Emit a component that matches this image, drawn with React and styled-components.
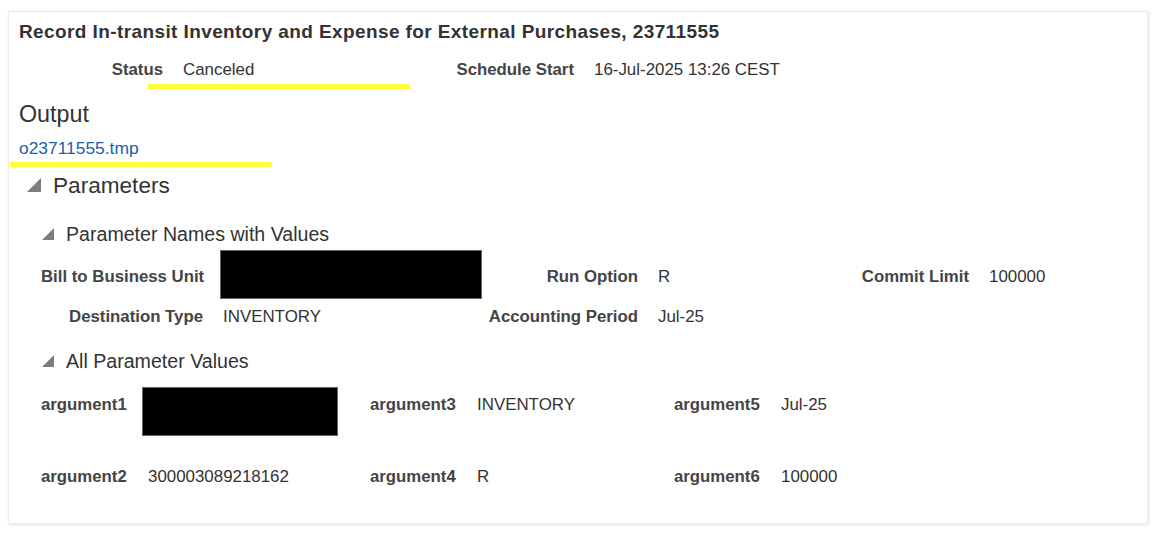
import React from "react";
import styled, { createGlobalStyle } from "styled-components";

const GlobalStyle = createGlobalStyle`
  body {
    margin: 0;
    background: #ffffff;
    font-family: "Liberation Sans", Arial, Helvetica, sans-serif;
    color: #333333;
  }
`;

const Page = styled.div`
  padding: 11px 8px 10px 8px;
`;

const Card = styled.section`
  border: 1px solid #ececec;
  box-shadow: 1px 1px 3px rgba(0, 0, 0, 0.12);
  padding: 0 10px 26px 10px;
  background: #fff;
`;

const Title = styled.h1`
  margin: 10px 0 0 0;
  font-size: 19px;
  letter-spacing: 0.4px;
  line-height: 20px;
  font-weight: bold;
  color: #333;
`;

const StatusRow = styled.div`
  position: relative;
  display: grid;
  grid-template-columns: 144px 221px 150px auto;
  column-gap: 20px;
  margin-top: 18px;
  height: 20px;
  align-items: center;
`;

const Label = styled.span`
  font-size: 16.8px;
  font-weight: bold;
  color: #444;
  white-space: nowrap;
  text-align: ${(p) => (p.left ? "left" : "right")};
`;

const Value = styled.span`
  font-size: 16.9px;
  color: #333;
  white-space: nowrap;
`;

const Underline = styled.div`
  position: absolute;
  top: 24px;
  left: ${(p) => p.left}px;
  width: 262px;
  height: 5px;
  background: #ffff3c;
`;

const Heading = styled.h2`
  margin: 21px 0 0 0;
  font-size: 23.3px;
  line-height: 26px;
  font-weight: normal;
  color: #333;
`;

const LinkRow = styled.div`
  position: relative;
  margin-top: 11px;
  height: 20px;
  display: flex;
  align-items: center;
`;

const FileLink = styled.a`
  font-size: 17.4px;
  color: #1a5ea8;
  text-decoration: none;
`;

const Disclosure = styled.div`
  display: flex;
  align-items: center;
  gap: 12px;
  margin-top: ${(p) => p.top}px;
  margin-left: ${(p) => (p.small ? 23 : 8)}px;
  height: ${(p) => (p.small ? 24 : 26)}px;
  font-size: ${(p) => (p.small ? 19.6 : 22.6)}px;
  color: #333;

  svg {
    flex: none;
    margin-top: ${(p) => (p.small ? -1 : -2)}px;
  }
`;

const FormGrid = styled.div`
  display: grid;
  grid-template-columns: ${(p) => p.cols};
  grid-auto-rows: 40px;
  column-gap: 20px;
  row-gap: ${(p) => p.rowGap || 0}px;
  align-items: center;
  margin-top: ${(p) => p.top}px;
  margin-left: 22px;
`;

const Redacted = styled.div`
  align-self: start;
  width: ${(p) => p.w}px;
  height: 49px;
  margin-left: ${(p) => p.dx}px;
  margin-top: ${(p) => p.dy}px;
  background: #000;
  border: 1px solid #666;
  box-sizing: border-box;
`;

const Triangle = ({ size }) => (
  <svg width={size} height={size} viewBox="0 0 12 12">
    <polygon points="12,0 12,12 0,12" fill="#7d7d7d" />
  </svg>
);

export default function App() {
  return (
    <>
      <GlobalStyle />
      <Page>
        <Card>
          <Title>
            Record In-transit Inventory and Expense for External Purchases,
            23711555
          </Title>

          <StatusRow>
            <Label>Status</Label>
            <Value>Canceled</Value>
            <Label>Schedule Start</Label>
            <Value>16-Jul-2025 13:26 CEST</Value>
            <Underline left={129} />
          </StatusRow>

          <Heading>Output</Heading>
          <LinkRow>
            <FileLink href="#">o23711555.tmp</FileLink>
            <Underline left={-9} />
          </LinkRow>

          <Disclosure top={15}>
            <Triangle size={14} />
            Parameters
          </Disclosure>

          <Disclosure small top={23}>
            <Triangle size={12} />
            Parameter Names with Values
          </Disclosure>

          <FormGrid top={11} cols="162px 245px 150px 161px 130px auto">
            <Label>Bill to Business Unit</Label>
            <Redacted w={262} dx={-3} dy={-7} />
            <Label>Run Option</Label>
            <Value>R</Value>
            <Label>Commit Limit</Label>
            <Value>100000</Value>

            <Label>Destination Type</Label>
            <Value>INVENTORY</Value>
            <Label>Accounting Period</Label>
            <Value>Jul-25</Value>
          </FormGrid>

          <Disclosure small top={12}>
            <Triangle size={12} />
            All Parameter Values
          </Disclosure>

          <FormGrid
            top={12}
            rowGap={32}
            cols="87px 202px 87px 177px 87px auto"
          >
            <Label left>argument1</Label>
            <Redacted w={196} dx={-6} dy={2} />
            <Label left>argument3</Label>
            <Value>INVENTORY</Value>
            <Label left>argument5</Label>
            <Value>Jul-25</Value>

            <Label left>argument2</Label>
            <Value>300003089218162</Value>
            <Label left>argument4</Label>
            <Value>R</Value>
            <Label left>argument6</Label>
            <Value>100000</Value>
          </FormGrid>
        </Card>
      </Page>
    </>
  );
}
